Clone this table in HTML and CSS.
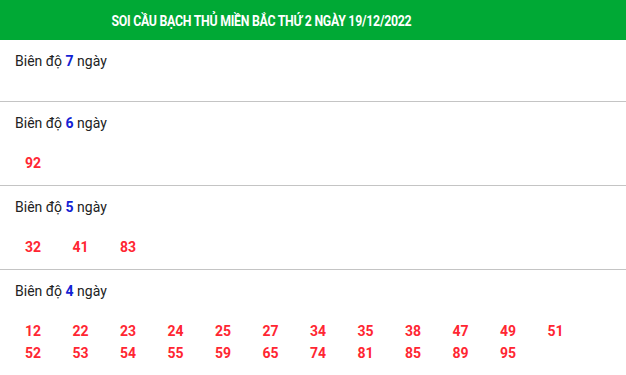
FILE: index.html
```html
<!DOCTYPE html>
<html lang="vi">
<head>
<meta charset="utf-8">
<title>Soi cầu bạch thủ</title>
<link rel="stylesheet" href="styles.css">
</head>
<body>
<div class="box">
  <div class="title"><span class="title-text">SOI CẦU BẠCH THỦ MIỀN BẮC THỨ 2 NGÀY 19/12/2022</span></div>
  <div class="section">
    <div class="label">Biên độ <b>7</b> ngày</div>
    <div class="nums"></div>
  </div>
  <div class="section">
    <div class="label">Biên độ <b>6</b> ngày</div>
    <div class="nums"><span>92</span></div>
  </div>
  <div class="section">
    <div class="label">Biên độ <b>5</b> ngày</div>
    <div class="nums"><span>32</span><span>41</span><span>83</span></div>
  </div>
  <div class="section">
    <div class="label">Biên độ <b>4</b> ngày</div>
    <div class="nums">
      <span>12</span><span>22</span><span>23</span><span>24</span><span>25</span><span>27</span><span>34</span><span>35</span><span>38</span><span>47</span><span>49</span><span>51</span>
      <span>52</span><span>53</span><span>54</span><span>55</span><span>59</span><span>65</span><span>74</span><span>81</span><span>85</span><span>89</span><span>95</span>
    </div>
  </div>
</div>
</body>
</html>
```
FILE: styles.css
```css
html, body {
  margin: 0;
  padding: 0;
  background: #fff;
}
body {
  font-family: Roboto, "Liberation Sans", sans-serif;
  font-size: 14px;
  color: #222;
}
.box {
  width: 626px;
}
.title {
  height: 40px;
  background: #00a935;
  color: #fff;
  display: flex;
  align-items: center;
  justify-content: center;
  padding-right: 103px;
  padding-top: 1px;
  box-sizing: border-box;
}
.title-text {
  font-weight: 700;
  font-size: 14px;
  letter-spacing: -0.3px;
  display: inline-block;
  transform: scaleX(0.88);
  white-space: nowrap;
}
.section {
  border-bottom: 1px solid #c4c4c4;
  padding: 10px 15px 0;
}
.label {
  line-height: 22px;
  height: 22px;
}
.label b {
  color: #1322d4;
  font-weight: 700;
}
.nums {
  margin-top: 18px;
  padding: 0 0 11px 10px;
  display: grid;
  grid-template-columns: repeat(12, 47.5px);
  grid-auto-rows: 22px;
  color: #ff2632;
  font-weight: 700;
  line-height: 22px;
}
```
